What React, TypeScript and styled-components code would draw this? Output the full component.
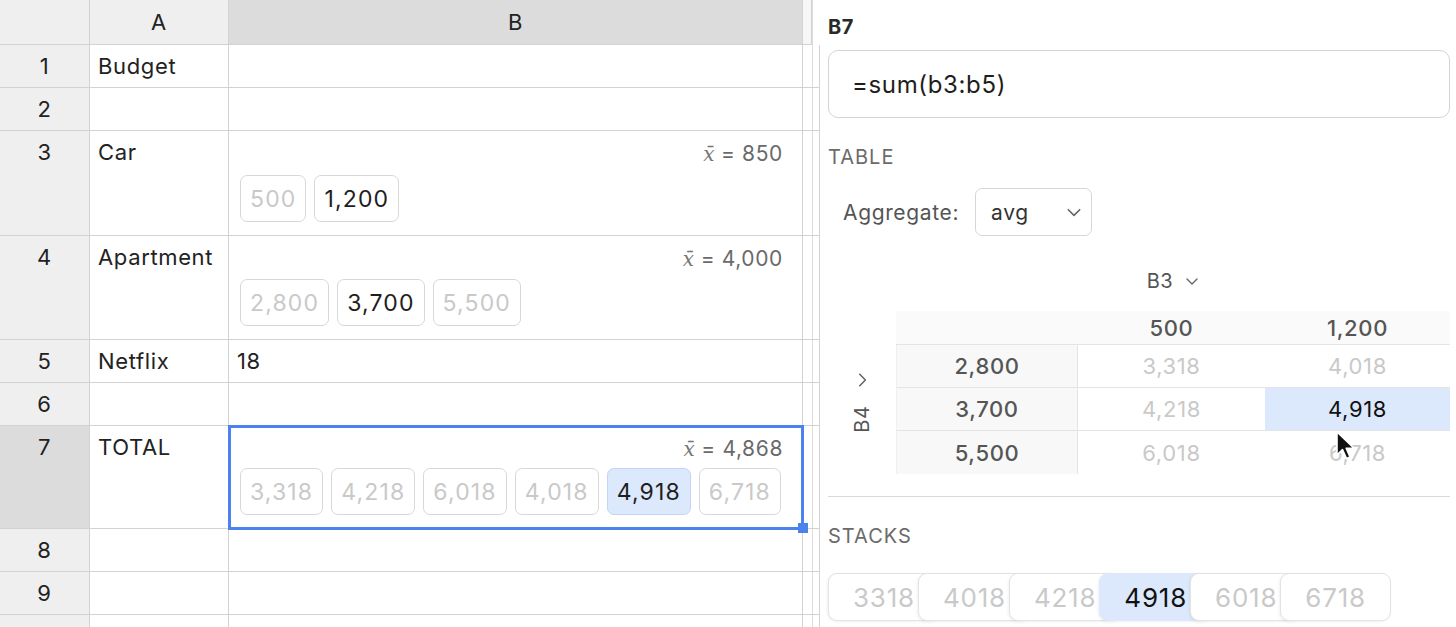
import styled, { createGlobalStyle } from 'styled-components';

const GlobalStyle = createGlobalStyle`
  html, body {
    margin: 0;
    padding: 0;
    background: #fff;
    overflow: hidden;
  }
  body {
    font-family: Inter, 'Noto Sans', 'Liberation Sans', sans-serif;
    color: #222;
    letter-spacing: 0.04em;
  }
`;

const GRID = '#d2d2d2';

const Page = styled.div`
  position: relative;
  display: flex;
  width: 1456px;
  height: 627px;
  overflow: hidden;
`;

/* ---------- spreadsheet ---------- */

const Sheet = styled.div`
  flex: none;
  width: 812px;
  display: grid;
  grid-template-columns: 90px 139px 574px 9px;
  grid-template-rows: 45px 43px 43px 105px 104px 43px 43px 103px 43px 43px 43px;
  font-size: 22px;
`;

const Corner = styled.div`
  box-sizing: border-box;
  background: #efefef;
  border-right: 1px solid ${GRID};
  border-bottom: 1px solid ${GRID};
`;

const ColHead = styled.div<{ $active?: boolean }>`
  box-sizing: border-box;
  background: ${({ $active }) => ($active ? '#dcdcdc' : '#efefef')};
  border-right: 1px solid ${GRID};
  border-bottom: 1px solid ${GRID};
  text-align: center;
  line-height: 44px;
`;

const EdgeHead = styled(ColHead)`
  background: #f6f6f6;
`;

const RowHead = styled.div<{ $active?: boolean }>`
  box-sizing: border-box;
  background: ${({ $active }) => ($active ? '#dcdcdc' : '#efefef')};
  border-right: 1px solid ${GRID};
  border-bottom: 1px solid ${GRID};
  text-align: center;
  line-height: 42px;
`;

const Cell = styled.div<{ $selected?: boolean }>`
  position: relative;
  box-sizing: border-box;
  border-right: 1px solid ${GRID};
  border-bottom: 1px solid ${GRID};
  padding: 0 8px;
  line-height: 42px;
  white-space: nowrap;
  ${({ $selected }) =>
    $selected &&
    `
    z-index: 2;
    outline: 3px solid #4b82ee;
    outline-offset: -2px;
    &::after {
      content: '';
      position: absolute;
      right: -6px;
      bottom: -5px;
      width: 10px;
      height: 10px;
      background: #4b82ee;
    }
  `}
`;

const StackCell = styled(Cell)`
  display: flex;
  flex-direction: column;
  justify-content: space-between;
  padding: 10px 19px 13px 11px;
  line-height: normal;
`;

const Mean = styled.div`
  align-self: flex-end;
  font-size: 21px;
  line-height: 26px;
  color: #6a6a6a;
  letter-spacing: 0.03em;
`;

const Xbar = styled.i`
  font-family: 'DejaVu Serif', 'Liberation Serif', serif;
  font-size: 20px;
  letter-spacing: 0;
  color: #777;
`;

const ChipRow = styled.div`
  display: flex;
  gap: 8px;
`;

const Chip = styled.div<{ $on?: boolean; $active?: boolean }>`
  box-sizing: border-box;
  height: 47px;
  padding: 0 9px;
  display: flex;
  align-items: center;
  border: 1.5px solid ${({ $active }) => ($active ? '#c3d5f2' : '#d8d8d8')};
  border-radius: 7px;
  background: ${({ $active }) => ($active ? '#dce8fb' : '#fff')};
  color: ${({ $on, $active }) => ($on || $active ? '#1e1e1e' : '#c9c9c9')};
  font-size: 23px;
  letter-spacing: 0.05em;
`;

/* ---------- side panel ---------- */

const Panel = styled.aside`
  flex: 1;
  min-width: 0;
  border-left: 1px solid #dcdcdc;
  padding: 0 6px 0 15px;
  display: flex;
  flex-direction: column;
`;

const CellName = styled.div`
  margin-top: 15px;
  font-weight: 700;
  font-size: 20px;
  line-height: 24px;
  color: #2a2a2a;
`;

const Formula = styled.div`
  box-sizing: border-box;
  margin-top: 11px;
  height: 68px;
  border: 1.5px solid #d4d4d4;
  border-radius: 10px;
  padding-left: 23px;
  display: flex;
  align-items: center;
  font-size: 24px;
  color: #1e1e1e;
`;

const SectionTitle = styled.div<{ $gap: number }>`
  margin-top: ${({ $gap }) => $gap}px;
  font-size: 20px;
  line-height: 24px;
  color: #6b6b6b;
  letter-spacing: 0.05em;
`;

const AggRow = styled.div`
  margin-top: 19px;
  padding-left: 15px;
  display: flex;
  align-items: center;
  gap: 16px;
  font-size: 21px;
  color: #555;
`;

const Select = styled.div`
  box-sizing: border-box;
  width: 117px;
  height: 48px;
  border: 1.5px solid #d6d6d6;
  border-radius: 7px;
  padding: 0 9px 0 15px;
  display: flex;
  align-items: center;
  justify-content: space-between;
  color: #333;
`;

const AxisTop = styled.div`
  margin-top: 33px;
  margin-left: 68px;
  display: flex;
  justify-content: center;
  align-items: center;
  gap: 12px;
  font-size: 20px;
  line-height: 24px;
  color: #555;
`;

const Pivot = styled.div`
  margin-top: 18px;
  display: flex;
`;

const AxisSide = styled.div`
  width: 68px;
  flex: none;
  display: flex;
  flex-direction: column;
  align-items: center;
  padding-top: 61px;
  gap: 19px;
  color: #555;
  font-size: 20px;
`;

const Vertical = styled.div`
  transform: rotate(-90deg);
  line-height: 24px;
`;

const PivotGrid = styled.div`
  flex: 1;
  display: grid;
  grid-template-columns: 182px 187px 1fr;
  grid-template-rows: 34px 43px 43px 43px;
  font-size: 22px;
`;

const PCell = styled.div<{ $kind: 'head' | 'label' | 'value'; $active?: boolean; $last?: boolean }>`
  box-sizing: border-box;
  display: flex;
  align-items: center;
  justify-content: center;
  border-bottom: ${({ $last }) => ($last ? 'none' : '1px solid #e4e4e4')};
  ${({ $kind, $active }) => {
    if ($kind === 'head') return 'background:#fafafa; color:#555; font-weight:500;';
    if ($kind === 'label')
      return 'background:#f8f8f8; color:#555; font-weight:500; border-right:1px solid #e4e4e4; border-left:1px solid #efefef;';
    return $active ? 'background:#dce8fb; color:#111;' : 'background:#fff; color:#c9c9c9;';
  }}
`;

const Divider = styled.hr`
  margin: 22px 0 0;
  border: none;
  border-top: 1.5px solid #d9d9d9;
`;

const Stack = styled.div`
  margin-top: 25px;
  display: flex;
`;

const StackChip = styled.div<{ $active?: boolean }>`
  box-sizing: border-box;
  height: 48px;
  padding: 0 24px;
  display: flex;
  align-items: center;
  border: 1.5px solid ${({ $active }) => ($active ? '#dce8fb' : '#e3e3e3')};
  border-radius: 9px;
  background: ${({ $active }) => ($active ? '#dce8fb' : '#fff')};
  color: ${({ $active }) => ($active ? '#111' : '#c9c9c9')};
  font-size: 26px;
  letter-spacing: 0.03em;
  box-shadow: -1px 1px 3px rgba(0, 0, 0, 0.06);
  & + & {
    margin-left: -22px;
  }
`;

const Cursor = styled.svg`
  position: absolute;
  left: 1335px;
  top: 430px;
`;

const Chevron = ({ dir = 'down', size = 14 }: { dir?: 'down' | 'right'; size?: number }) => (
  <svg width={size} height={size} viewBox="0 0 14 14" fill="none">
    <path
      d={dir === 'down' ? 'M2 5l5 5 5-5' : 'M5 2l5 5-5 5'}
      stroke="#666"
      strokeWidth="1.4"
      strokeLinecap="round"
      strokeLinejoin="round"
    />
  </svg>
);

type Row = { n: number; h?: boolean; a?: string; b?: string; mean?: string; chips?: { v: string; on?: boolean; active?: boolean }[] };

const rows: Row[] = [
  { n: 1, a: 'Budget' },
  { n: 2 },
  { n: 3, a: 'Car', mean: '850', chips: [{ v: '500' }, { v: '1,200', on: true }] },
  { n: 4, a: 'Apartment', mean: '4,000', chips: [{ v: '2,800' }, { v: '3,700', on: true }, { v: '5,500' }] },
  { n: 5, a: 'Netflix', b: '18' },
  { n: 6 },
  {
    n: 7,
    h: true,
    a: 'TOTAL',
    mean: '4,868',
    chips: [
      { v: '3,318' },
      { v: '4,218' },
      { v: '6,018' },
      { v: '4,018' },
      { v: '4,918', active: true },
      { v: '6,718' },
    ],
  },
  { n: 8 },
  { n: 9 },
  { n: 10 },
];

const pivot = [
  { label: '2,800', vals: ['3,318', '4,018'] },
  { label: '3,700', vals: ['4,218', '4,918'] },
  { label: '5,500', vals: ['6,018', '6,718'] },
];

const stacks = ['3318', '4018', '4218', '4918', '6018', '6718'];

export default function App() {
  return (
    <Page>
      <GlobalStyle />
      <Sheet>
        <Corner />
        <ColHead>A</ColHead>
        <ColHead $active>B</ColHead>
        <EdgeHead />
        {rows.map((r) => (
          <>
            {/* row 10 is only a sliver at the bottom; its number falls below the fold */}
            <RowHead key={`h${r.n}`} $active={r.h}>
              {r.n < 10 ? r.n : ''}
            </RowHead>
            <Cell key={`a${r.n}`}>{r.a}</Cell>
            {r.chips ? (
              <StackCell key={`b${r.n}`} $selected={r.h}>
                <Mean>
                  <Xbar>x̄</Xbar> = {r.mean}
                </Mean>
                <ChipRow>
                  {r.chips.map((c) => (
                    <Chip key={c.v} $on={c.on} $active={c.active}>
                      {c.v}
                    </Chip>
                  ))}
                </ChipRow>
              </StackCell>
            ) : (
              <Cell key={`b${r.n}`}>{r.b}</Cell>
            )}
            <Cell key={`c${r.n}`} />
          </>
        ))}
      </Sheet>

      <Panel>
        <CellName>B7</CellName>
        <Formula>=sum(b3:b5)</Formula>

        <SectionTitle $gap={27}>TABLE</SectionTitle>
        <AggRow>
          Aggregate:
          <Select>
            avg
            <Chevron size={16} />
          </Select>
        </AggRow>

        <AxisTop>
          B3
          <Chevron />
        </AxisTop>
        <Pivot>
          <AxisSide>
            <Chevron dir="right" size={16} />
            <Vertical>B4</Vertical>
          </AxisSide>
          <PivotGrid>
            <PCell $kind="head" />
            <PCell $kind="head">500</PCell>
            <PCell $kind="head">1,200</PCell>
            {pivot.map((p, i) => (
              <>
                <PCell key={`l${i}`} $kind="label" $last={i === pivot.length - 1}>
                  {p.label}
                </PCell>
                {p.vals.map((v, j) => (
                  <PCell
                    key={`v${i}${j}`}
                    $kind="value"
                    $active={i === 1 && j === 1}
                    $last={i === pivot.length - 1}
                  >
                    {v}
                  </PCell>
                ))}
              </>
            ))}
          </PivotGrid>
        </Pivot>

        <Divider />
        <SectionTitle $gap={27}>STACKS</SectionTitle>
        <Stack>
          {stacks.map((s) => (
            <StackChip key={s} $active={s === '4918'}>
              {s}
            </StackChip>
          ))}
        </Stack>
      </Panel>

      <Cursor width="22" height="32" viewBox="0 0 22 32">
        <path
          d="M2 2 L2 25 L7.5 19.5 L11.5 28.5 L15 27 L11.2 18.2 L19 18.2 Z"
          fill="#111"
          stroke="#fff"
          strokeWidth="1.6"
          strokeLinejoin="round"
        />
      </Cursor>
    </Page>
  );
}
